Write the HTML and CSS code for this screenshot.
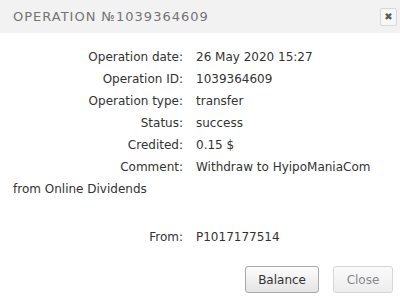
FILE: index.html
```html
<!DOCTYPE html>
<html lang="en">
<head>
  <meta charset="UTF-8" />
  <title>Operation №1039364609</title>
  <link rel="stylesheet" href="styles.css">
</head>
<body>
  <div class="dialog">
    <div class="dialog-header">
      <h1>Operation №1039364609</h1>
      <button class="dialog-close" title="Close">&#x2716;</button>
    </div>

    <div class="dialog-body">
      <div class="row"><span class="label">Operation date:</span>26 May 2020 15:27</div>
      <div class="row"><span class="label">Operation ID:</span>1039364609</div>
      <div class="row"><span class="label">Operation type:</span>transfer</div>
      <div class="row"><span class="label">Status:</span>success</div>
      <div class="row"><span class="label">Credited:</span>0.15 $</div>
      <div class="row"><span class="label">Comment:</span>Withdraw to HyipoManiaCom from Online Dividends</div>
      <div class="row row-from"><span class="label">From:</span>P1017177514</div>
    </div>

    <div class="dialog-buttons">
      <button class="btn">Balance</button>
      <button class="btn btn-muted">Close</button>
    </div>
  </div>
</body>
</html>
```

FILE: styles.css
```css
* {
  box-sizing: border-box;
  margin: 0;
  padding: 0;
}

body {
  width: 400px;
  height: 302px;
  background: #fff;
  font-family: 'DejaVu Sans', sans-serif;
  color: #333;
  overflow: hidden;
}

.dialog-header {
  display: flex;
  align-items: center;
  justify-content: space-between;
  height: 33px;
  padding: 0 3px 0 13px;
  background: #f2f2f2;
}

.dialog-header h1 {
  font-size: 13px;
  font-weight: 400;
  text-transform: uppercase;
  letter-spacing: 1px;
  color: #747474;
}

.dialog-close {
  width: 17px;
  height: 18px;
  border: 1px solid #d8d8d8;
  border-radius: 2px;
  background: #f7f7f7;
  color: #5a5a5a;
  font-size: 10px;
  line-height: 16px;
  text-align: center;
  font-family: 'DejaVu Sans', sans-serif;
  cursor: pointer;
}

.dialog-body {
  padding: 13px 10px 0 13px;
  font-size: 12px;
  line-height: 22px;
  width: 400px;
}

.label {
  display: inline-block;
  width: 170px;
  margin-right: 13px;
  text-align: right;
}

.row-from {
  margin-top: 26px;
}

.dialog-buttons {
  display: flex;
  justify-content: flex-end;
  gap: 14px;
  padding: 18px 7px 0 0;
}

.btn {
  height: 27px;
  padding: 0 12px;
  font-family: 'DejaVu Sans', sans-serif;
  font-size: 12px;
  color: #333;
  background: linear-gradient(#fdfdfd, #e4e4e4);
  border: 1px solid #a9a9a9;
  border-radius: 3px;
  cursor: pointer;
}

.btn-muted {
  width: 60px;
  padding: 0;
  color: #888;
  background: linear-gradient(#fafafa, #ededed);
  border-color: #d6d6d6;
}
```
